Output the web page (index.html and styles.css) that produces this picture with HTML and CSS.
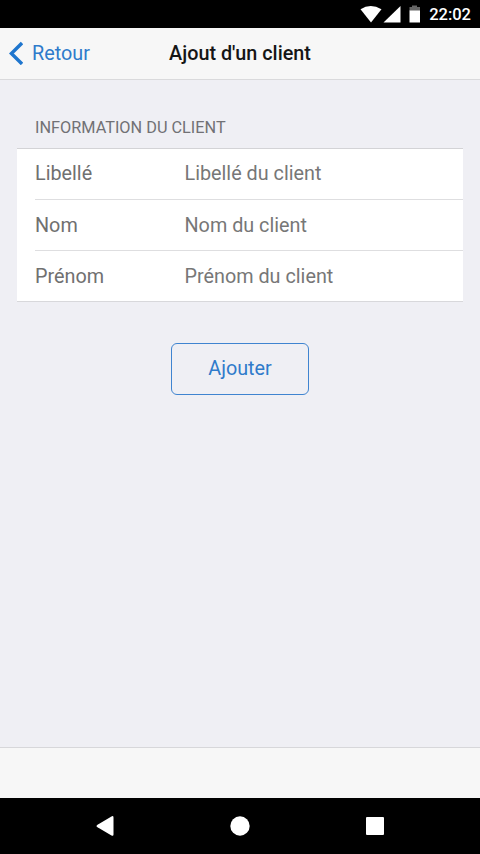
FILE: index.html
```html
<!DOCTYPE html>
<html lang="fr">
<head>
<meta charset="utf-8">
<title>Ajout d'un client</title>
<link rel="stylesheet" href="styles.css">
</head>
<body>
<div class="screen">
  <div class="status">
    <svg class="status-icons" width="62" height="20" viewBox="0 0 62 20" fill="#fff">
      <path d="M0.5 5.3Q10.500-1.500 21.500 5.300L11 18.500Z"/>
      <path d="M40.500 2V18.500H23.500Z"/>
      <path d="M52 1.500h5v1.500h3v4h-10.500v-4h2.500z" fill="#666"/>
      <path d="M49.500 6.500h10.500v12h-10.500z"/>
    </svg>
    <span class="clock">22:02</span>
  </div>
  <header class="navbar">
    <a class="back">
      <svg width="14" height="24" viewBox="0 0 14 24" fill="none" stroke="#1f76ce" stroke-width="3.400"><path d="M13 2L2.400 12.500L13 23"/></svg>
      <span>Retour</span>
    </a>
    <h1 class="title">Ajout d'un client</h1>
  </header>
  <main class="content">
    <h2 class="section-title">INFORMATION DU CLIENT</h2>
    <form class="list">
      <label class="row"><span class="label">Libellé</span><input class="field" type="text" placeholder="Libellé du client"></label>
      <label class="row"><span class="label">Nom</span><input class="field" type="text" placeholder="Nom du client"></label>
      <label class="row"><span class="label">Prénom</span><input class="field" type="text" placeholder="Prénom du client"></label>
    </form>
    <button class="add" type="button">Ajouter</button>
  </main>
  <footer class="toolbar"></footer>
  <nav class="system">
    <svg width="18" height="22" viewBox="0 0 18 22" fill="#fff"><path d="M1.500 9.700L15.500 1.400Q17.500 .500 17.500 2.500V19.500Q17.500 21.500 15.500 20.500L1.500 12.300Q-.5 11 1.500 9.700Z"/></svg>
    <svg width="20" height="20" viewBox="0 0 20 20" fill="#fff"><circle cx="10" cy="10" r="9.700"/></svg>
    <svg width="18" height="18" viewBox="0 0 18 18" fill="#fff"><rect width="18" height="18" rx="1"/></svg>
  </nav>
</div>
</body>
</html>
```
FILE: styles.css
```css
* { box-sizing: border-box; }
body { margin: 0; font-family: Roboto, "Liberation Sans", sans-serif; }
.screen { display: flex; flex-direction: column; height: 854px; background: #efeff4; }
.status { display: flex; justify-content: flex-end; height: 28px; padding: 4px 9px 0 0; background: #000; color: #fff; }
.status-icons { margin-right: 7px; }
.clock { font-size: 16.5px; font-weight: 500; line-height: 22px; }
.navbar { display: grid; grid-template-columns: 1fr auto 1fr; align-items: center; height: 52px; padding: 0 9px 1px; background: #f7f7f7; border-bottom: 1px solid #dadadc; }
.back { display: flex; align-items: center; gap: 9px; color: #2f7bcb; font-size: 19.800px; line-height: 24px; }
.title { margin: 0; color: #151515; font-size: 19.800px; font-weight: 500; line-height: 24px; }
.back span, .title { padding-top: 1px; }
.content { flex: 1; padding: 38px 17px 0; }
.section-title { margin: 0 0 10px 18px; color: #717175; font-size: 16.300px; font-weight: 400; line-height: 20px; }
.list { padding-left: 18px; background: #fff; border-top: 1px solid #d3d3d6; border-bottom: 1px solid #d8d8db; }
.row { display: flex; align-items: center; height: 51px; border-bottom: 1px solid #dedee0; }
.row + .row { padding-top: 2px; }
.row:last-child { height: 50px; padding-top: 1px; border-bottom: 0; }
.label { width: 149.500px; color: #707070; font-size: 19.800px; line-height: 24px; }
.field { flex: 1; min-width: 0; padding: 0; border: 0; background: none; font: 19.800px/24px Roboto, sans-serif; }
.field::placeholder { color: #777; }
.add { display: block; width: 138px; height: 52px; margin: 41px auto 0; padding: 0; border: 1.500px solid #3f84d0; border-radius: 6px; background: transparent; color: #2f7bcb; font: 19.800px/24px Roboto, sans-serif; }
.toolbar { height: 51px; background: #f7f7f7; border-top: 1px solid #d7d7da; }
.system { display: flex; justify-content: space-between; align-items: center; height: 56px; padding: 0 96px; background: #000; }
```
